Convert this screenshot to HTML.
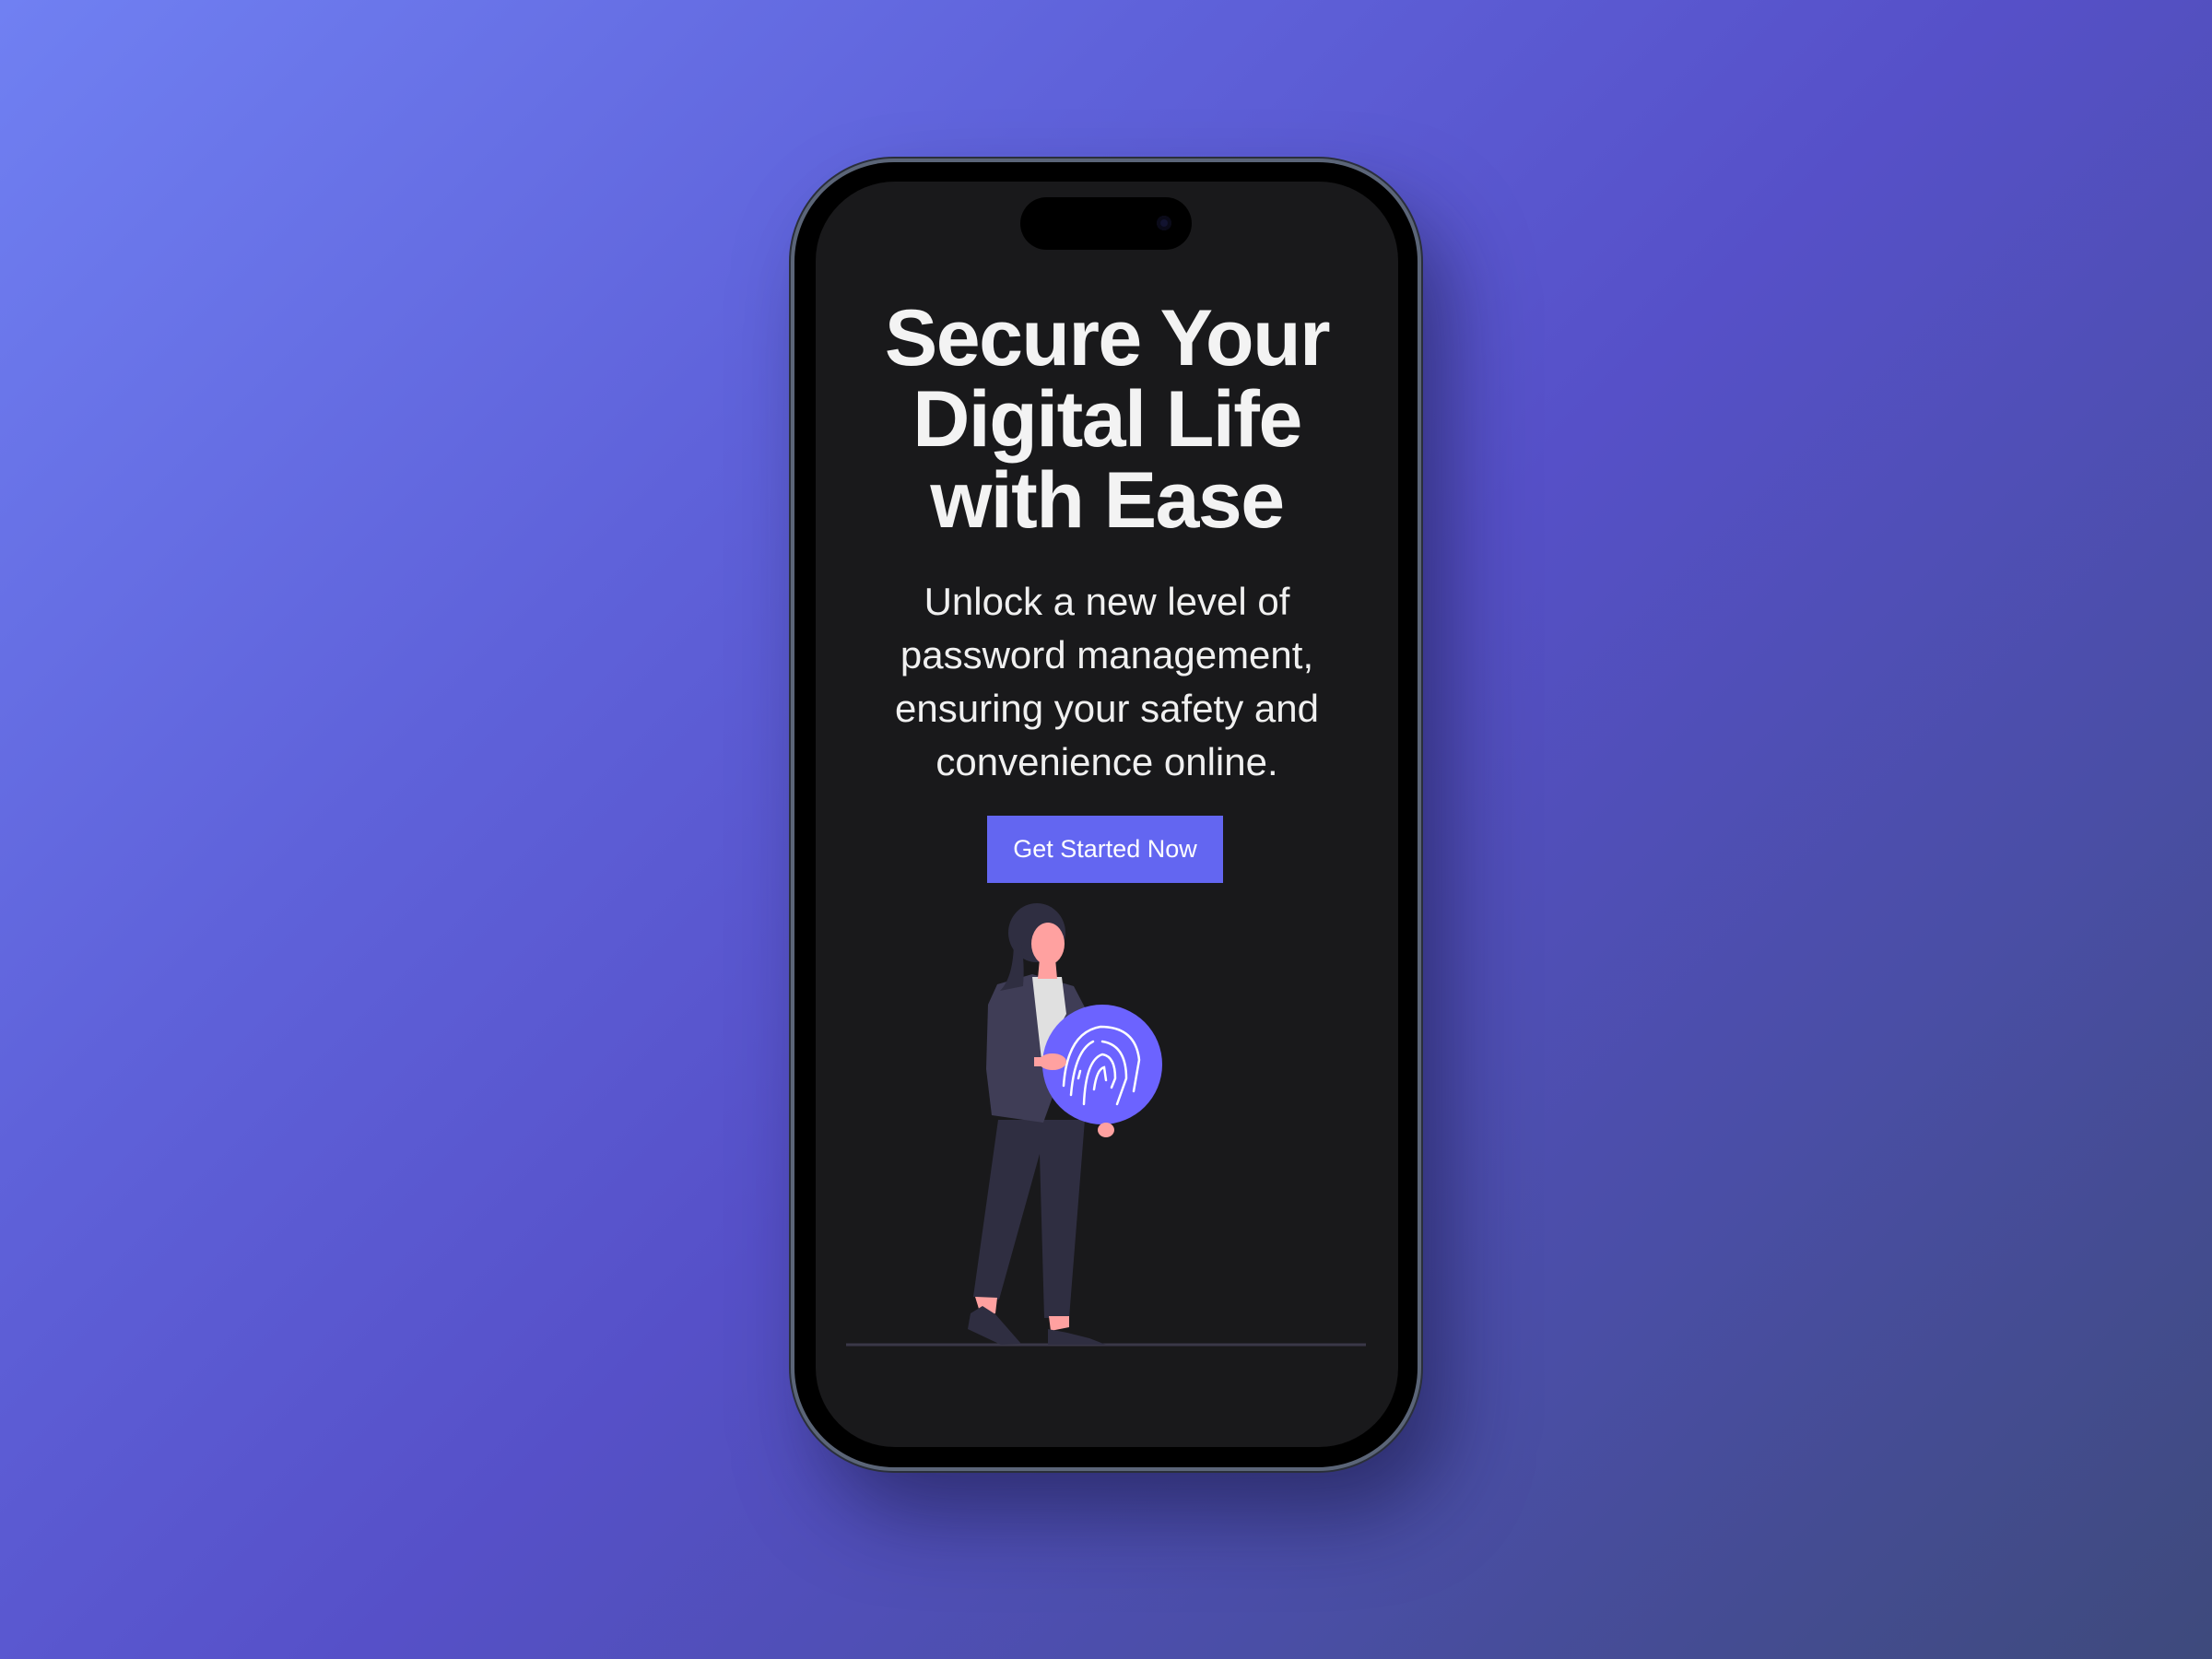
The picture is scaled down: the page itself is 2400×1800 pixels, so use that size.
<!DOCTYPE html>
<html><head><meta charset="utf-8"><style>
html,body{margin:0;padding:0}
body{width:2400px;height:1800px;overflow:hidden;position:relative;
background:linear-gradient(135deg,#7080f2 0%,#5f62da 30%,#5650c8 52%,#4a4ea6 75%,#3e4a7c 100%);
font-family:"Liberation Sans",sans-serif}
.phone{position:absolute;left:862px;top:176px;width:676px;height:1416px;border-radius:108px;
background:#000;box-shadow:0 0 0 4px #5b6578,0 0 0 6px #2a2f3a,30px 50px 90px rgba(20,20,60,.55)}
.screen{position:absolute;left:23px;top:21px;width:632px;height:1373px;border-radius:86px;background:#19191b;overflow:hidden}
.island{position:absolute;left:222px;top:17px;width:186px;height:57px;border-radius:29px;background:#000}
.cam{position:absolute;right:22px;top:20px;width:16px;height:16px;border-radius:50%;background:#121330;box-shadow:inset 0 0 0 4px #0a0a18}
h1{position:absolute;top:126px;left:0;width:100%;margin:0;text-align:center;color:#f3f3f3;font-size:86px;line-height:88px;font-weight:bold;letter-spacing:-1.5px}
p{position:absolute;top:427px;left:30px;width:572px;margin:0;text-align:center;color:#f0f0f0;font-size:42px;line-height:58px}
.btn{position:absolute;left:186px;top:688px;width:256px;height:73px;background:#6366f1;color:#fff;font-size:27px;line-height:73px;text-align:center}
.sb{position:absolute;background:#3d4455;border-radius:2px;width:5px}
</style></head><body>
<div class="sb" style="left:856px;top:432px;height:46px"></div>
<div class="sb" style="left:856px;top:528px;height:92px"></div>
<div class="sb" style="left:856px;top:655px;height:95px"></div>
<div class="sb" style="left:1539px;top:597px;height:153px"></div>
<div class="phone"><div class="screen">
<div class="island"><div class="cam"></div></div>
<h1>Secure Your<br>Digital Life<br>with Ease</h1>
<p>Unlock a new level of password management, ensuring your safety and convenience online.</p>
<div class="btn">Get Started Now</div>
</div></div>
<svg style="position:absolute;left:0;top:0" width="2400" height="1800">
<line x1="918" y1="1459" x2="1482" y2="1459" stroke="#3a3848" stroke-width="3"/>
<polygon points="1083,1215 1177,1215 1160,1430 1133,1430 1128,1252 1084,1410 1056,1407" fill="#2f2e41"/>
<polygon points="1058,1407 1082,1408 1080,1425 1070,1428 1062,1420" fill="#ffa1a0"/>
<polygon points="1138,1428 1160,1428 1160,1440 1140,1444" fill="#ffa1a0"/>
<polygon points="1053,1425 1066,1417 1080,1426 1094,1442 1108,1458 1086,1459 1050,1442" fill="#2f2e41"/>
<polygon points="1137,1442 1158,1446 1182,1452 1200,1459 1137,1459" fill="#2f2e41"/>
<polygon points="1082,1068 1120,1057 1165,1070 1177,1093 1132,1218 1076,1210 1070,1160 1072,1090" fill="#3f3d56"/>
<polygon points="1120,1060 1152,1060 1157,1100 1130,1150" fill="#e0e0e0"/>
<ellipse cx="1125" cy="1012" rx="31" ry="32" fill="#2f2e41"/>
<path d="M1100,1020 Q1100,1060 1085,1075 L1110,1070 Q1112,1045 1108,1025Z" fill="#2f2e41"/>
<ellipse cx="1137" cy="1024" rx="18" ry="23" fill="#ffa1a0"/>
<polygon points="1128,1040 1145,1040 1147,1062 1126,1062" fill="#ffa1a0"/>
<circle cx="1196" cy="1155" r="65" fill="#6c63ff"/>
<g fill="none" stroke="#fff" stroke-width="2.5" stroke-linecap="round">
<path d="M1154,1178 Q1158,1120 1194,1114 Q1232,1114 1236,1150 L1230,1184"/>
<path d="M1162,1188 Q1166,1140 1186,1130"/>
<path d="M1196,1130 Q1222,1134 1222,1170 L1212,1198"/>
<path d="M1176,1198 Q1178,1150 1196,1144 Q1210,1146 1210,1170 L1206,1180"/>
<path d="M1187,1182 Q1190,1160 1198,1158 L1200,1172"/>
<path d="M1172,1162 L1170,1170"/>
</g>
<ellipse cx="1142" cy="1152" rx="15" ry="9" fill="#ffa1a0"/>
<rect x="1122" y="1147" width="18" height="10" fill="#ffa1a0"/>
<ellipse cx="1200" cy="1226" rx="9" ry="8" fill="#ffa1a0"/>
</svg>
</body></html>
